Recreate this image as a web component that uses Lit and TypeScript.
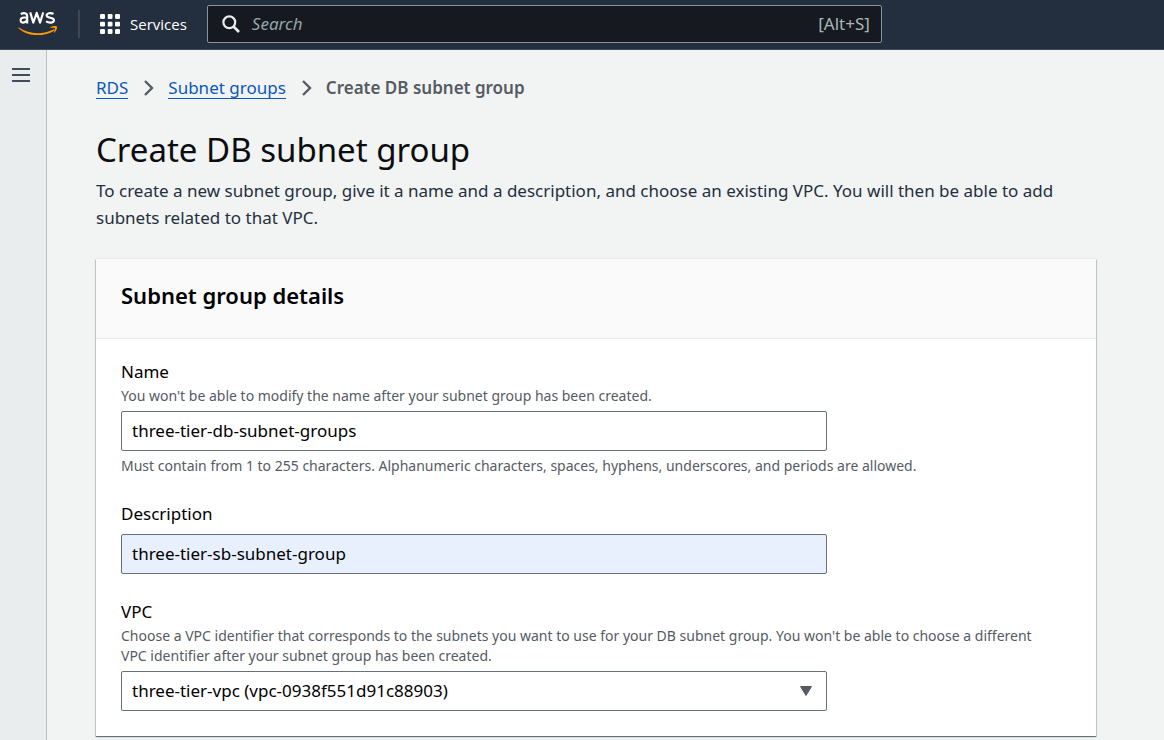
import { LitElement, html, css, nothing } from "lit";
import { customElement, property } from "lit/decorators.js";

const chevron = html`<svg class="chevron" viewBox="0 0 12 16" aria-hidden="true">
  <path d="M3 1 L10 8 L3 15" fill="none" stroke="#545b64" stroke-width="2.4" />
</svg>`;

@customElement("console-header")
class ConsoleHeader extends LitElement {
  static styles = css`
    :host {
      display: flex;
      align-items: center;
      height: 50px;
      box-sizing: border-box;
      padding: 0 18px 1px;
      background: #232f3e;
      border-bottom: 1px solid #414d5c;
      color: #fff;
    }
    .logo {
      display: flex;
      margin-right: 20px;
    }
    .logo svg {
      width: 40px;
      height: 28px;
    }
    .divider {
      width: 2px;
      height: 28px;
      background: #414750;
      margin-right: 20px;
    }
    .services {
      display: flex;
      align-items: center;
      gap: 10px;
      padding: 0;
      margin-right: 20px;
      border: 0;
      background: none;
      color: inherit;
      font: 500 15px/20px "Open Sans", sans-serif;
    }
    .services svg {
      width: 20px;
      height: 20px;
    }
    .search {
      display: flex;
      align-items: center;
      flex: 0 1 675px;
      height: 38px;
      box-sizing: border-box;
      padding: 0 11px 0 14px;
      background: #16191f;
      border: 1px solid #879596;
      border-radius: 2px;
    }
    .search svg {
      flex: none;
      width: 18px;
      height: 18px;
      margin-right: 12px;
    }
    .search input {
      flex: 1;
      min-width: 0;
      padding: 0;
      border: 0;
      outline: 0;
      background: none;
      color: #fff;
      font: 17px/24px var(--font);
    }
    .search input::placeholder {
      color: #95a5a6;
      font-style: italic;
      opacity: 1;
    }
    .shortcut {
      color: #aab7b8;
      font-size: 17px;
      line-height: 24px;
    }
  `;

  render() {
    return html`
      <a class="logo" href="#" aria-label="AWS home">
        <svg viewBox="0 0 40 28">
          <g fill="none" stroke="#fff" stroke-width="2.1" stroke-linejoin="round">
            <path d="M2.800 4.200 C5.200 2.500 9.200 2.600 9.200 6.200 V13.600 M9.200 7.800 C6 7.100 2.600 7.300 2.600 10.300 C2.600 13.600 7.500 13.300 9.200 9.800" />
            <path d="M12.200 2.400 L15.300 12.600 L18.700 2.800 L22.100 12.600 L25.200 2.400" />
            <path d="M35.600 3.900 C33 2.500 28.600 2.900 28.600 5.500 C28.600 8.400 36 6.900 36 10.100 C36 13.200 31 13.200 28 11.400" />
          </g>
          <path d="M1 17.500 C11 24.600 25 24.800 35.500 19.500 C36.500 19 37.200 20 36.200 20.700 C25.500 27.300 9 26.500 0.500 18.200 C0.100 17.600 0.500 17.200 1 17.500Z" fill="#f90" />
          <path d="M32.500 17.300 C34.500 15.800 38.300 15.700 38.900 16.500 C39.500 17.400 38.400 21 36.500 22.600 C36.100 22.900 35.800 22.600 36 22.200 C36.600 20.800 37.300 18.800 36.900 18.200 C36.500 17.600 34.300 17.800 32.900 18 C32.400 18 32.100 17.700 32.500 17.300Z" fill="#f90" />
        </svg>
      </a>
      <span class="divider"></span>
      <button class="services" type="button">
        <svg viewBox="0 0 20 20" fill="#fff" aria-hidden="true">
          ${[0, 7.5, 15].map((y) =>
            [0, 7.5, 15].map((x) => html`<svg x=${x} y=${y} width="5" height="5"><rect width="5" height="5" rx="1.2" /></svg>`)
          )}
        </svg>
        Services
      </button>
      <label class="search">
        <svg viewBox="0 0 18 18" fill="none" stroke="#eaeded" aria-hidden="true">
          <circle cx="7.300" cy="7.300" r="5.900" stroke-width="2.200" />
          <path d="M11.500 11.500 L17 17" stroke-width="2.700" />
        </svg>
        <input type="search" placeholder="Search" aria-label="Search" />
        <span class="shortcut">[Alt+S]</span>
      </label>
    `;
  }
}

@customElement("form-field")
class FormField extends LitElement {
  @property() label = "";
  @property() hint = "";
  @property() constraint = "";
  @property() value = "";
  @property() kind = "text";
  @property({ type: Boolean }) autofilled = false;

  static styles = css`
    :host {
      display: block;
    }
    .label {
      display: block;
      color: #000;
      font-size: 17px;
      line-height: 24px;
    }
    .hint,
    .constraint {
      margin: 2px 0 0;
      padding-right: 20px;
      color: #545b64;
      font-size: 14px;
      line-height: 20px;
    }
    .constraint {
      margin-top: 5px;
    }
    .control {
      position: relative;
      width: calc(75% - 7px);
      margin-top: 5px;
    }
    .label + .control {
      margin-top: 8px;
    }
    .box {
      display: block;
      width: 100%;
      height: 40px;
      box-sizing: border-box;
      margin: 0;
      padding: 0 10px 1px;
      border: 1px solid #687078;
      border-radius: 2px;
      background: #fff;
      color: #000;
      font: 17px/24px var(--font);
      appearance: none;
    }
    .autofilled {
      background: #e8f0fe;
    }
    .caret {
      position: absolute;
      right: 14px;
      top: 14px;
      width: 14px;
      height: 12px;
      pointer-events: none;
    }
  `;

  render() {
    return html`
      <label class="label" for="control">${this.label}</label>
      ${this.hint ? html`<p class="hint">${this.hint}</p>` : nothing}
      <div class="control">
        ${this.kind === "select"
          ? html`<select class="box" id="control"><option>${this.value}</option></select>
              <svg class="caret" viewBox="0 0 14 12" aria-hidden="true">
                <path d="M1.500 1.500 H12.500 L7 10.500Z" fill="#545b64" stroke="#545b64" stroke-linejoin="round" />
              </svg>`
          : html`<input class="box ${this.autofilled ? "autofilled" : ""}" id="control" type="text" .value=${this.value} />`}
      </div>
      ${this.constraint ? html`<p class="constraint">${this.constraint}</p>` : nothing}
    `;
  }
}

@customElement("app-root")
class AppRoot extends LitElement {
  static styles = css`
    :host {
      --font: "Noto Sans", "Open Sans", sans-serif;
      display: flex;
      flex-direction: column;
      min-height: 100vh;
      background: #f2f3f3;
      font-family: var(--font);
      color: #16191f;
    }
    .body {
      display: flex;
      flex: 1;
    }
    .rail {
      flex: none;
      width: 46px;
      background: #eaeded;
      border-right: 1px solid #b8bfc0;
    }
    .menu {
      display: block;
      margin: 16px 0 0 12px;
      padding: 0;
      border: 0;
      background: none;
    }
    .menu svg {
      display: block;
      width: 18px;
      height: 18px;
    }
    main {
      flex: 1;
      min-width: 0;
      padding: 26px 68px 3px 49px;
    }
    .crumbs {
      display: flex;
      align-items: center;
      gap: 14px;
      font-size: 17px;
      line-height: 24px;
    }
    .crumbs a {
      color: #0a58b8;
      text-decoration: none;
      line-height: 20px;
      border-bottom: 1px solid #0a58b8;
    }
    .crumbs .current {
      color: #545b64;
      font-weight: 600;
    }
    .chevron {
      width: 12px;
      height: 16px;
    }
    h1 {
      margin: 28px 0 0;
      font-size: 33px;
      font-weight: 400;
      line-height: 44px;
      color: #0b0d10;
    }
    .intro {
      margin: 5px 0 28px;
      font-size: 17px;
      line-height: 27px;
      color: #232f3e;
    }
    .card {
      background: #fff;
      box-shadow: 0 1px 1px 0 rgba(0, 28, 36, 0.45), 1px 1px 1px 0 rgba(0, 28, 36, 0.12),
        -1px 1px 1px 0 rgba(0, 28, 36, 0.12), 0 0 1px 0 rgba(0, 28, 36, 0.2);
    }
    h2 {
      margin: 0;
      padding: 21px 25px 28px;
      background: #fafafa;
      border-bottom: 1px solid #eaeded;
      font-size: 22px;
      font-weight: 600;
      line-height: 30px;
      color: #000;
    }
    .fields {
      display: grid;
      gap: 26px;
      padding: 21px 25px 25px;
    }
  `;

  render() {
    return html`
      <console-header></console-header>
      <div class="body">
        <div class="rail">
          <button class="menu" type="button" aria-label="Open navigation">
            <svg viewBox="0 0 18 18" stroke="#414d5c" stroke-width="2">
              <path d="M0 3 H18 M0 9 H18 M0 15 H18" />
            </svg>
          </button>
        </div>
        <main>
          <nav class="crumbs" aria-label="Breadcrumbs">
            <a href="#">RDS</a>${chevron}<a href="#">Subnet groups</a>${chevron}
            <span class="current">Create DB subnet group</span>
          </nav>
          <h1>Create DB subnet group</h1>
          <p class="intro">
            To create a new subnet group, give it a name and a description, and choose an existing VPC. You will then be
            able to add subnets related to that VPC.
          </p>
          <section class="card">
            <h2>Subnet group details</h2>
            <div class="fields">
              <form-field
                label="Name"
                hint="You won't be able to modify the name after your subnet group has been created."
                value="three-tier-db-subnet-groups"
                constraint="Must contain from 1 to 255 characters. Alphanumeric characters, spaces, hyphens, underscores, and periods are allowed."
              ></form-field>
              <form-field label="Description" value="three-tier-sb-subnet-group" autofilled></form-field>
              <form-field
                label="VPC"
                kind="select"
                hint="Choose a VPC identifier that corresponds to the subnets you want to use for your DB subnet group. You won't be able to choose a different VPC identifier after your subnet group has been created."
                value="three-tier-vpc (vpc-0938f551d91c88903)"
              ></form-field>
            </div>
          </section>
        </main>
      </div>
    `;
  }
}
